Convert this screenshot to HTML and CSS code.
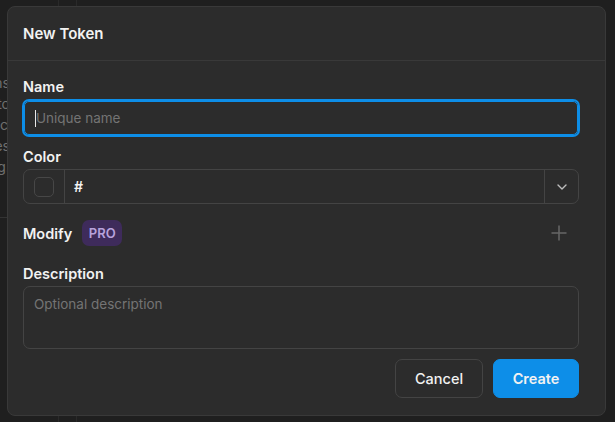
FILE: index.html
```html
<!DOCTYPE html>
<html>
<head>
<meta charset="utf-8">
<link rel="stylesheet" href="styles.css">
</head>
<body>
<div class="page">
  <div class="col-line col-a"></div>
  <div class="col-line col-b"></div>
  <div class="page-text">
    <div class="pt">tokens</div>
    <div class="pt">into</div>
    <div class="pt pt-in">nc</div>
    <div class="pt">values</div>
    <div class="pt">saving.</div>
  </div>
  <div class="page-rule"></div>
</div>

<div class="dialog">
  <div class="dlg-head">New Token</div>
  <div class="dlg-body">
    <label class="lbl">Name</label>
    <div class="input focus"><span class="caret"></span><span class="ph">Unique name</span></div>

    <label class="lbl lbl-gap">Color</label>
    <div class="color-field">
      <div class="swatch-cell"><div class="swatch"></div></div>
      <div class="hex">#</div>
      <div class="chev-cell">
        <svg width="10" height="6" viewBox="0 0 10 6"><path d="M1 1 L5 5 L9 1" fill="none" stroke="#bdbdbd" stroke-width="1.4" stroke-linecap="round" stroke-linejoin="round"/></svg>
      </div>
    </div>

    <div class="modify-row">
      <span class="lbl-inline">Modify</span>
      <span class="pro">PRO</span>
      <span class="spacer"></span>
      <svg class="plus" width="16" height="16" viewBox="0 0 16 16"><path d="M8 0.5 V15.5 M0.5 8 H15.5" stroke="#676767" stroke-width="1.5"/></svg>
    </div>

    <label class="lbl lbl-desc">Description</label>
    <div class="textarea"><span class="ph">Optional description</span></div>

    <div class="actions">
      <button class="btn btn-cancel">Cancel</button>
      <button class="btn btn-create">Create</button>
    </div>
  </div>
</div>
</body>
</html>
```

FILE: styles.css
```css
* { box-sizing: border-box; }
html, body { margin: 0; padding: 0; }
body {
  width: 615px;
  height: 422px;
  overflow: hidden;
  background: #1f1f1f;
  font-family: Inter, "Noto Sans", sans-serif;
  color: #f2f2f2;
  position: relative;
}
.page { position: absolute; inset: 0; }
.col-line { position: absolute; top: 0; bottom: 0; width: 1px; background: #2a2a2a; }
.col-a { left: 58px; }
.col-b { left: 76px; }
.page-text {
  position: absolute;
  top: 72px;
  left: -60px;
  width: 70px;
  text-align: right;
  font-size: 14px;
  line-height: 21px;
  color: #6f6f6f;
}
.pt-in { padding-right: 2px; }
.page-rule { position: absolute; left: 0; top: 217px; width: 20px; height: 1px; background: #333; }

.dialog {
  position: absolute;
  left: 7px;
  top: 6px;
  width: 599px;
  height: 410px;
  background: #2c2c2c;
  border: 1px solid #393939;
  border-radius: 8px;
  display: flex;
  flex-direction: column;
}
.dlg-head {
  height: 54px;
  padding: 0 15px;
  display: flex;
  align-items: center;
  font-size: 15px;
  font-weight: 600;
  border-bottom: 1px solid #393939;
}
.dlg-body {
  display: flex;
  flex-direction: column;
  padding: 16px 26px 0 15px;
}
.lbl {
  font-size: 14.5px;
  font-weight: 600;
  line-height: 20px;
  height: 20px;
  margin-bottom: 4px;
}
.lbl-gap { margin-top: 12px; margin-bottom: 2px; }
.lbl-desc { margin-top: 18px; margin-bottom: 2px; }
.input {
  height: 34px;
  border: 1px solid #0d8ee8;
  box-shadow: 0 0 0 2px #0d8ee8;
  border-radius: 5px;
  margin: 0 1px;
  display: flex;
  align-items: center;
  padding-left: 10px;
  font-size: 14px;
}
.caret { width: 1px; height: 17px; background: #e8e8e8; margin-right: 0; }
.ph { color: #747474; font-size: 13.5px; }
.color-field {
  height: 35px;
  border: 1px solid #444;
  border-radius: 7px;
  display: flex;
  align-items: stretch;
}
.swatch-cell {
  width: 41px;
  border-right: 1px solid #444;
  display: flex;
  align-items: center;
  justify-content: center;
}
.swatch {
  width: 20px;
  height: 20px;
  border: 1px solid #474747;
  border-radius: 5px;
}
.hex {
  flex: 1;
  display: flex;
  align-items: center;
  padding-left: 9px;
  font-size: 14px;
  font-weight: 600;
}
.chev-cell {
  width: 34px;
  border-left: 1px solid #444;
  display: flex;
  align-items: center;
  justify-content: center;
}
.modify-row {
  margin-top: 16px;
  height: 26px;
  display: flex;
  align-items: center;
}
.lbl-inline { font-size: 14.5px; font-weight: 600; }
.pro {
  margin-left: 10px;
  width: 40px;
  height: 26px;
  border-radius: 7px;
  background: #3e2b5b;
  color: #b7a2dc;
  font-size: 13px;
  font-weight: 600;
  display: flex;
  align-items: center;
  justify-content: center;
}
.spacer { flex: 1; }
.plus { margin-right: 12px; }
.textarea {
  height: 63px;
  border: 1px solid #444;
  border-radius: 7px;
  padding: 6px 10px;
  line-height: 20px;
}
.actions {
  margin-top: 10px;
  display: flex;
  justify-content: flex-end;
  gap: 10px;
}
.btn {
  height: 39px;
  border-radius: 7px;
  font-family: Inter, "Noto Sans", sans-serif;
  font-size: 14.5px;
  font-weight: 500;
  color: #f2f2f2;
  cursor: pointer;
}
.btn-cancel { width: 88px; background: #2c2c2c; border: 1px solid #444; }
.btn-create { width: 86px; background: #0d8ee8; border: 1px solid #0d8ee8; font-weight: 600; }
```
